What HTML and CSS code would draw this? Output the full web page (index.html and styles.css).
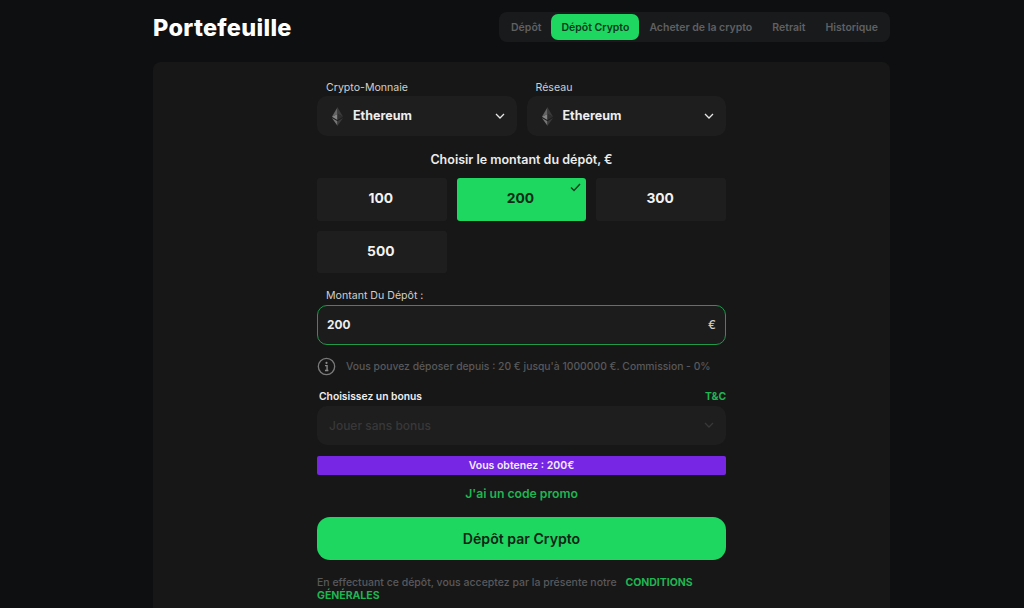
FILE: index.html
```html
<!DOCTYPE html>
<html lang="fr">

<head>
    <meta charset="UTF-8">
    <meta name="viewport" content="width=device-width, initial-scale=1.0">
    <title>Portefeuille</title>
    <link rel="stylesheet" href="styles.css">
</head>

<body>
    <div class="wallet">
        <header class="wallet-header">
            <h1>Portefeuille</h1>
            <nav class="tabs">
                <a class="tab">Dépôt</a>
                <a class="tab tab-active">Dépôt Crypto</a>
                <a class="tab">Acheter de la crypto</a>
                <a class="tab">Retrait</a>
                <a class="tab">Historique</a>
            </nav>
        </header>

        <main class="panel">
            <form class="deposit-form">
                <div class="select-row">
                    <div class="field">
                        <label class="field-label">Crypto-Monnaie</label>
                        <div class="select">
                            <svg class="eth-icon" viewBox="0 0 14 20" width="13" height="19">
                                <path d="M7 0 L7 7.4 L1 10.2 Z" fill="#666" />
                                <path d="M7 0 L13 10.2 L7 7.4 Z" fill="#3a3a3a" />
                                <path d="M1 10.2 L7 7.4 L7 13.8 Z" fill="#858585" />
                                <path d="M13 10.2 L7 7.4 L7 13.8 Z" fill="#2e2e2e" />
                                <path d="M1 11.5 L7 15.2 L7 20 Z" fill="#767676" />
                                <path d="M13 11.5 L7 15.2 L7 20 Z" fill="#3a3a3a" />
                            </svg>
                            <span class="select-value">Ethereum</span>
                            <svg class="chevron" viewBox="0 0 10 6" width="10" height="6">
                                <path d="M1 1 L5 5 L9 1" fill="none" stroke="#e6e6e6" stroke-width="1.3" />
                            </svg>
                        </div>
                    </div>
                    <div class="field">
                        <label class="field-label">Réseau</label>
                        <div class="select">
                            <svg class="eth-icon" viewBox="0 0 14 20" width="13" height="19">
                                <path d="M7 0 L7 7.4 L1 10.2 Z" fill="#666" />
                                <path d="M7 0 L13 10.2 L7 7.4 Z" fill="#3a3a3a" />
                                <path d="M1 10.2 L7 7.4 L7 13.8 Z" fill="#858585" />
                                <path d="M13 10.2 L7 7.4 L7 13.8 Z" fill="#2e2e2e" />
                                <path d="M1 11.5 L7 15.2 L7 20 Z" fill="#767676" />
                                <path d="M13 11.5 L7 15.2 L7 20 Z" fill="#3a3a3a" />
                            </svg>
                            <span class="select-value">Ethereum</span>
                            <svg class="chevron" viewBox="0 0 10 6" width="10" height="6">
                                <path d="M1 1 L5 5 L9 1" fill="none" stroke="#e6e6e6" stroke-width="1.3" />
                            </svg>
                        </div>
                    </div>
                </div>

                <p class="amount-title">Choisir le montant du dépôt, €</p>
                <div class="amounts">
                    <div class="amount">100</div>
                    <div class="amount amount-active">
                        200
                        <svg class="check" viewBox="0 0 11 9" width="11" height="9">
                            <path d="M1 4.5 L4 7.5 L10 1" fill="none" stroke="#0e3d20" stroke-width="1.4" />
                        </svg>
                    </div>
                    <div class="amount">300</div>
                    <div class="amount">500</div>
                </div>

                <label class="field-label field-label-amount">Montant Du Dépôt :</label>
                <div class="amount-input">
                    <span>200</span>
                    <span class="currency">€</span>
                </div>

                <div class="info">
                    <svg viewBox="0 0 20 20" width="19" height="19">
                        <circle cx="10" cy="10" r="8.6" fill="none" stroke="#7a7a7a" stroke-width="1.4" />
                        <circle cx="10" cy="6.2" r="1.1" fill="#8a8a8a" />
                        <path d="M8.4 9 H10.6 V14 M8.4 14.2 H12" fill="none" stroke="#8a8a8a" stroke-width="1.4" />
                    </svg>
                    <span>Vous pouvez déposer depuis : 20 € jusqu'à 1000000 €. Commission - 0%</span>
                </div>

                <div class="bonus-head">
                    <span>Choisissez un bonus</span>
                    <a class="link">T&amp;C</a>
                </div>
                <div class="select select-disabled">
                    <span>Jouer sans bonus</span>
                    <svg class="chevron" viewBox="0 0 10 6" width="10" height="6">
                        <path d="M1 1 L5 5 L9 1" fill="none" stroke="#383838" stroke-width="1.3" />
                    </svg>
                </div>

                <div class="bonus-bar">Vous obtenez : 200€</div>
                <a class="promo link">J'ai un code promo</a>
                <button class="submit" type="button">Dépôt par Crypto</button>

                <p class="terms">En effectuant ce dépôt, vous acceptez par la présente notre <a class="link terms-link">CONDITIONS</a> <a class="link">GÉNÉRALES</a></p>
            </form>
        </main>
    </div>
</body>

</html>
```

FILE: styles.css
```css
* {
    box-sizing: border-box;
}

html,
body {
    height: 100%;
}

body {
    margin: 0;
    overflow: hidden;
    background-color: #0e0f11;
    color: #fff;
    font-family: 'Inter', 'Liberation Sans', sans-serif;
}

.wallet {
    width: 737px;
    margin-left: 153px;
}

.wallet-header {
    display: flex;
    justify-content: space-between;
    align-items: center;
    height: 62px;
    padding-bottom: 8px;
}

h1 {
    margin: 0;
    font-size: 23.5px;
    font-weight: 800;
    letter-spacing: 0.3px;
}

.tabs {
    display: flex;
    align-items: center;
    height: 30px;
    padding: 1px 2px;
    background-color: #191a1c;
    border-radius: 8px;
}

.tab {
    padding: 0 10px;
    font-size: 10.5px;
    font-weight: 600;
    color: #5f6062;
}

.tab-active {
    display: flex;
    align-items: center;
    height: 26px;
    background-color: #1ed760;
    border-radius: 7px;
    color: #0c3a1d;
}

.panel {
    display: flex;
    justify-content: center;
    height: 560px;
    padding-top: 19px;
    background-color: #171717;
    border-radius: 8px;
}

.deposit-form {
    width: 409px;
}

.select-row {
    display: grid;
    grid-template-columns: 1fr 1fr;
    gap: 10px;
}

.field-label {
    display: block;
    padding-left: 9px;
    font-size: 10.6px;
    line-height: 14px;
    color: #cfcfcf;
}

.select {
    display: flex;
    align-items: center;
    height: 40px;
    margin-top: 1px;
    padding: 0 12px 0 14px;
    background-color: #1e1e1e;
    border-radius: 10px;
}

.eth-icon {
    margin-right: 9px;
}

.select-value {
    flex: 1;
    position: relative;
    top: -1px;
    font-size: 12.5px;
    font-weight: 700;
    color: #eee;
}

.amount-title {
    margin: 16px 0 10px;
    font-size: 12.5px;
    line-height: 16px;
    font-weight: 600;
    text-align: center;
    color: #ececec;
}

.amounts {
    display: grid;
    grid-template-columns: repeat(3, 1fr);
    gap: 10px;
}

.amount {
    position: relative;
    display: flex;
    align-items: center;
    justify-content: center;
    height: 42.5px;
    padding: 0 2px 2px 0;
    background-color: #1e1e1e;
    border-radius: 3px;
    font-size: 13.8px;
    font-weight: 700;
    color: #f2f2f2;
}

.amount-active {
    background-color: #1ed760;
    color: #0b2d17;
}

.check {
    position: absolute;
    top: 5px;
    right: 5px;
}

.field-label-amount {
    margin-top: 15.5px;
}

.amount-input {
    display: flex;
    justify-content: space-between;
    align-items: center;
    height: 40px;
    margin-top: 2px;
    padding: 0 9px;
    background-color: #1c1c1c;
    border: 1px solid #1f9a4a;
    border-radius: 10px;
    font-size: 11.8px;
    font-weight: 700;
    color: #eee;
}

.currency {
    font-weight: 500;
    color: #ccc;
}

.info {
    display: flex;
    align-items: center;
    gap: 10px;
    margin-top: 12px;
    font-size: 10.35px;
    font-weight: 500;
    color: #59595b;
}

.info svg {
    flex: none;
}

.bonus-head {
    display: flex;
    justify-content: space-between;
    align-items: center;
    margin-top: 13px;
    padding-left: 2px;
    font-size: 10.3px;
    line-height: 14px;
    font-weight: 600;
    color: #eee;
}

.link {
    color: #1fb552;
    font-weight: 700;
}

.select-disabled {
    justify-content: space-between;
    height: 39px;
    margin-top: 3px;
    padding: 0 12px;
    font-size: 12px;
    font-weight: 500;
    color: #383838;
}

.bonus-bar {
    height: 19px;
    margin-top: 11px;
    background-color: #7726e3;
    border-radius: 2px;
    font-size: 10.5px;
    line-height: 19px;
    font-weight: 600;
    text-align: center;
    color: #f2ecfb;
}

.promo {
    display: block;
    margin-top: 10px;
    font-size: 12.2px;
    line-height: 17px;
    font-weight: 600;
    text-align: center;
}

.submit {
    display: block;
    width: 100%;
    height: 43px;
    margin-top: 15px;
    border: none;
    border-radius: 13px;
    background-color: #1ed760;
    font-family: inherit;
    font-size: 14.1px;
    font-weight: 600;
    color: #0f2417;
}

.terms {
    margin: 16px 0 0;
    font-size: 10.5px;
    line-height: 13px;
    font-weight: 500;
    color: #59595b;
}

.terms-link {
    padding-left: 6px;
}
```
